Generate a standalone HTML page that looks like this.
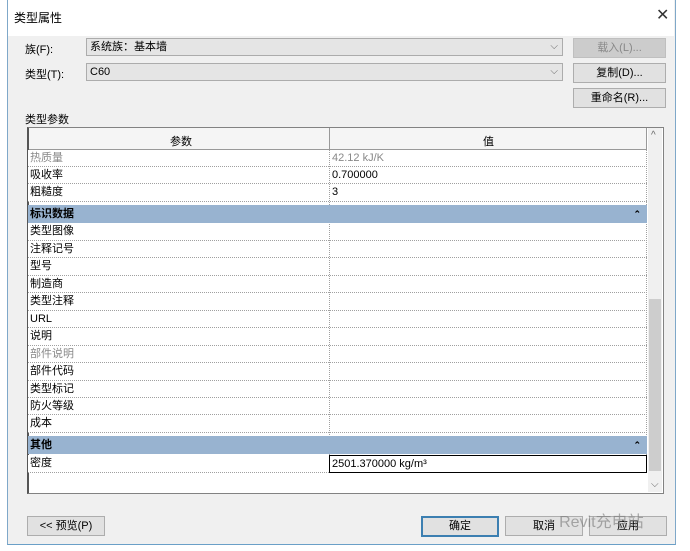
<!DOCTYPE html><html><head><meta charset="utf-8"><style>
body{margin:0;width:690px;height:551px;background:#fff;position:relative;overflow:hidden;font-family:"Liberation Sans","Noto Sans CJK SC",sans-serif;font-size:11px;color:#000}
.a{position:absolute}
.win{left:7px;top:0;width:667px;height:544px;border-left:1px solid #7fa8c9;border-right:1px solid #7fa8c9;border-bottom:1px solid #6a9fc7;background:#f0f0f0}
.btn{position:absolute;background:#e1e1e1;border:1px solid #adadad;text-align:center;line-height:18px;height:18px}
.cb{position:absolute;background:#e5e5e5;border:1px solid #acacac;height:16px;line-height:16px;padding-left:3px}
.cb span{position:absolute;right:4px;top:0;color:#666;font-size:10px}
.row{position:absolute;left:28px;width:619px;border-bottom:1px dotted #a0a0a0;background:#fff;line-height:17px}
.row .l{position:absolute;left:2px;top:0;line-height:17px}
.row .v{position:absolute;left:304px;top:0;line-height:17px}
.g{position:absolute;left:28px;width:619px;background:#98b3d0;font-weight:bold;line-height:18px;z-index:3}
</style></head><body>
<div class="a win"></div>
<div class="a" style="left:8px;top:0;width:666px;height:36px;background:#fff"></div>
<div class="a" style="left:14px;top:9px;font-size:12px">类型属性</div>
<div class="a" style="left:656px;top:5px;font-size:16px;color:#333">✕</div>
<div class="a" style="left:25px;top:41px">族(F):</div>
<div class="a" style="left:25px;top:66px">类型(T):</div>
<div class="cb" style="left:86px;top:38px;width:472px">系统族：基本墙<span>⌵</span></div>
<div class="cb" style="left:86px;top:63px;width:472px">C60<span>⌵</span></div>
<div class="btn" style="left:573px;top:38px;width:91px;color:#888;background:#cccccc;border-color:#bfbfbf">载入(L)...</div>
<div class="btn" style="left:573px;top:63px;width:91px">复制(D)...</div>
<div class="btn" style="left:573px;top:88px;width:91px">重命名(R)...</div>
<div class="a" style="left:25px;top:111px">类型参数</div>
<div class="a" style="left:27px;top:127px;width:634px;height:365px;border:1px solid #828282;border-left:2px solid #555;background:#fff"></div>
<div class="a" style="left:29px;top:128px;width:618px;height:21px;background:#f5f5f5;border-bottom:1px solid #999"></div>
<div class="a" style="left:329px;top:128px;width:1px;height:22px;background:#999"></div>
<div class="a" style="left:646px;top:128px;width:1px;height:22px;background:#999"></div>
<div class="a" style="left:170px;top:133px">参数</div>
<div class="a" style="left:483px;top:133px">值</div>
<div class="a" style="left:648px;top:128px;width:14px;height:364px;background:#f0f0f0"></div>
<div class="a" style="left:649px;top:299px;width:12px;height:172px;background:#cdcdcd"></div>
<div class="a" style="left:651px;top:130px;color:#666;font-size:10px">^</div>
<div class="a" style="left:651px;top:479px;color:#666;font-size:10px">⌵</div>
<div class="a" style="left:329px;top:150px;width:0;height:305px;border-left:1px dotted #a0a0a0;z-index:2"></div>
<div class="a" style="left:646px;top:150px;width:0;height:305px;border-left:1px dotted #a0a0a0;z-index:2"></div>

<div class="row" style="top:150px;height:16px;color:#888"><span class="l">热质量</span><span class="v">42.12 kJ/K</span></div>
<div class="row" style="top:167px;height:16px"><span class="l">吸收率</span><span class="v">0.700000</span></div>
<div class="row" style="top:184px;height:17px"><span class="l">粗糙度</span><span class="v">3</span></div>
<div class="g" style="top:205px;height:18px"><span class="a" style="left:2px;top:0">标识数据</span><span class="a" style="right:6px;top:0;font-size:9px">⌃</span></div>
<div class="row" style="top:223px;height:17px"><span class="l">类型图像</span></div>
<div class="row" style="top:241px;height:16px"><span class="l">注释记号</span></div>
<div class="row" style="top:258px;height:17px"><span class="l">型号</span></div>
<div class="row" style="top:276px;height:16px"><span class="l">制造商</span></div>
<div class="row" style="top:293px;height:17px"><span class="l">类型注释</span></div>
<div class="row" style="top:311px;height:16px"><span class="l">URL</span></div>
<div class="row" style="top:328px;height:17px"><span class="l">说明</span></div>
<div class="row" style="top:346px;height:16px;color:#888"><span class="l">部件说明</span></div>
<div class="row" style="top:363px;height:17px"><span class="l">部件代码</span></div>
<div class="row" style="top:381px;height:16px"><span class="l">类型标记</span></div>
<div class="row" style="top:398px;height:16px"><span class="l">防火等级</span></div>
<div class="row" style="top:415px;height:17px"><span class="l">成本</span></div>
<div class="g" style="top:436px;height:18px"><span class="a" style="left:2px;top:0">其他</span><span class="a" style="right:6px;top:0;font-size:9px">⌃</span></div>
<div class="row" style="top:455px;height:17px"><span class="l">密度</span></div>
<div class="a" style="left:329px;top:455px;width:316px;height:16px;border:1px solid #000;background:#fff;z-index:3"><span class="a" style="left:2px;top:0;line-height:16px">2501.370000 kg/m³</span></div>

<div class="btn" style="left:27px;top:516px;width:76px">&lt;&lt; 预览(P)</div>
<div class="btn" style="left:421px;top:516px;width:74px;border:2px solid #3c7fb1;height:17px;line-height:17px">确定</div>
<div class="btn" style="left:505px;top:516px;width:76px">取消</div>
<div class="btn" style="left:589px;top:516px;width:76px">应用</div>
<div class="a" style="left:545px;top:508px;font-size:16px;color:rgba(120,120,120,0.6)">◔ Revit充电站</div>
</body></html>
